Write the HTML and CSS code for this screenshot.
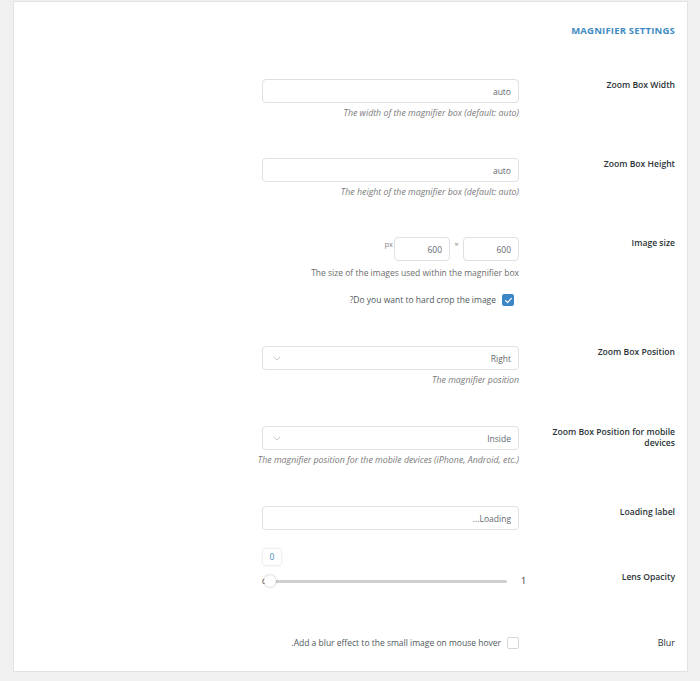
FILE: index.html
```html
<!DOCTYPE html>
<html lang="en" dir="rtl">
<head>
<meta charset="utf-8">
<title>Magnifier Settings</title>
<link rel="stylesheet" href="styles.css">
</head>
<body>
<div class="panel">
  <h2 class="heading">Magnifier Settings</h2>

  <div class="row">
    <div class="label">Zoom Box Width</div>
    <div class="field">
      <input class="text-input" type="text" value="auto">
      <p class="desc">The width of the magnifier box (default: auto)</p>
    </div>
  </div>

  <div class="row">
    <div class="label">Zoom Box Height</div>
    <div class="field">
      <input class="text-input" type="text" value="auto">
      <p class="desc">The height of the magnifier box (default: auto)</p>
    </div>
  </div>

  <div class="row row-size">
    <div class="label">Image size</div>
    <div class="field">
      <div class="size-inputs">
        <input class="text-input small" type="text" value="600">
        <span class="times">×</span>
        <input class="text-input small" type="text" value="600">
        <span class="px">px</span>
      </div>
      <p class="desc plain">The size of the images used within the magnifier box</p>
      <label class="check-line crop">
        <span class="checkbox checked"><svg viewBox="0 0 12 12" width="9" height="9"><path d="M2.2 6.3 L4.8 8.8 L9.8 3.2" fill="none" stroke="#fff" stroke-width="1.6" stroke-linecap="round" stroke-linejoin="round"/></svg></span>
        <span>Do you want to hard crop the image?</span>
      </label>
    </div>
  </div>

  <div class="row">
    <div class="label">Zoom Box Position</div>
    <div class="field">
      <div class="select"><span>Right</span><svg class="chev" viewBox="0 0 10 6" width="8" height="5"><path d="M1 1 L5 5 L9 1" fill="none" stroke="#b8b8b8" stroke-width="1"/></svg></div>
      <p class="desc">The magnifier position</p>
    </div>
  </div>

  <div class="row row-mobile">
    <div class="label">Zoom Box Position for mobile devices</div>
    <div class="field">
      <div class="select"><span>Inside</span><svg class="chev" viewBox="0 0 10 6" width="8" height="5"><path d="M1 1 L5 5 L9 1" fill="none" stroke="#b8b8b8" stroke-width="1"/></svg></div>
      <p class="desc nowrap">The magnifier position for the mobile devices (iPhone, Android, etc.)</p>
    </div>
  </div>

  <div class="row row-loading">
    <div class="label">Loading label</div>
    <div class="field">
      <input class="text-input" type="text" value="Loading...">
    </div>
  </div>

  <div class="row row-slider">
    <div class="label">Lens Opacity</div>
    <div class="field">
      <div class="slider">
        <span class="min">0</span>
        <div class="track">
          <span class="thumb"></span>
          <span class="bubble">0</span>
        </div>
        <span class="max">1</span>
      </div>
    </div>
  </div>

  <div class="row row-blur">
    <div class="label label-normal">Blur</div>
    <div class="field">
      <label class="check-line">
        <span class="checkbox"></span>
        <span>Add a blur effect to the small image on mouse hover.</span>
      </label>
    </div>
  </div>
</div>
</body>
</html>
```
FILE: styles.css
```css
html, body {
  margin: 0;
  padding: 0;
}
body {
  background: #f0f0f1;
  font-family: "Open Sans", "Noto Sans", "Liberation Sans", sans-serif;
  width: 700px;
  height: 681px;
  direction: rtl;
}
.panel {
  margin: 1px 12px 0 13px;
  height: 671px;
  box-sizing: border-box;
  background: #fff;
  border: 1px solid #e3e3e3;
  padding: 22px 12px 0 0;
}
.heading {
  margin: 0 0 21px;
  font-size: 9.5px;
  line-height: 14px;
  font-weight: 700;
  text-transform: uppercase;
  color: #3f8cc4;
  letter-spacing: 0.2px;
}
.row {
  display: flex;
  gap: 6px;
  padding: 20px 0 19px;
}
.row-mobile {
  padding-top: 21px;
}
.row-loading {
  padding-top: 21px;
}
.label {
  flex: none;
  width: 150px;
  font-size: 8.6px;
  line-height: 11px;
  font-weight: 600;
  color: #2c3338;
  padding-top: 1px;
}
.label-normal {
  font-weight: 400;
  font-size: 9px;
}
.field {
  flex: none;
  width: 257px;
}
.text-input {
  display: block;
  width: 100%;
  height: 24px;
  box-sizing: border-box;
  border: 1px solid #e0e0e0;
  border-radius: 4px;
  padding: 0 7px;
  font-family: inherit;
  font-size: 8.5px;
  color: #646970;
  background: #fff;
  outline: none;
  direction: rtl;
}
.desc {
  margin: 4px 0 0;
  font-size: 8.8px;
  line-height: 12px;
  font-style: italic;
  color: #7a7a7a;
}
.desc.plain {
  font-style: normal;
  font-size: 8.5px;
  color: #6c6c6c;
  margin-top: 6px;
}
.nowrap {
  white-space: nowrap;
}
.size-inputs {
  display: flex;
  align-items: flex-start;
}
.text-input.small {
  width: 56px;
  flex: none;
}
.times {
  font-size: 8px;
  color: #888;
  width: 13px;
  text-align: center;
  line-height: 10px;
  padding-top: 2px;
}
.px {
  font-size: 7.5px;
  color: #888;
  line-height: 10px;
  padding-top: 2px;
  margin-right: 1px;
}
.check-line {
  display: flex;
  align-items: center;
  gap: 6px;
  font-size: 8.5px;
  line-height: 14px;
  color: #50575e;
}
.check-line.crop {
  margin-top: 14px;
  padding-right: 5px;
}
.checkbox {
  flex: none;
  width: 10px;
  height: 10px;
  border: 1px solid #d6d6d6;
  border-radius: 2px;
  background: #fff;
  display: flex;
  align-items: center;
  justify-content: center;
}
.checkbox.checked {
  background: #3c86c8;
  border-color: #3c86c8;
}
.select {
  height: 24px;
  box-sizing: border-box;
  border: 1px solid #e0e0e0;
  border-radius: 4px;
  padding: 0 7px 0 10px;
  display: flex;
  align-items: center;
  justify-content: space-between;
  font-size: 8.5px;
  color: #646970;
}
.row-slider {
  padding-top: 22px;
}
.slider {
  direction: ltr;
  display: flex;
  align-items: center;
  height: 12px;
  margin-top: 4px;
  width: 270px;
  margin-right: -13px;
}
.min {
  font-size: 8px;
  color: #333;
  width: 8px;
  line-height: 10px;
}
.track {
  position: relative;
  width: 237px;
  height: 3px;
  background: #cfcfcf;
  border-radius: 2px;
}
.thumb {
  position: absolute;
  left: -6px;
  top: -5px;
  width: 12px;
  height: 12px;
  border-radius: 50%;
  background: #fff;
  box-shadow: 0 0 2px rgba(0, 0, 0, 0.35);
  box-sizing: border-box;
}
.bubble {
  position: absolute;
  left: -7px;
  top: -31px;
  width: 18px;
  height: 16px;
  background: #fff;
  border-radius: 3px;
  box-shadow: 0 0 3px rgba(0, 0, 0, 0.18);
  font-size: 8.5px;
  line-height: 16px;
  text-align: center;
  color: #3f8cc4;
}
.max {
  font-size: 9px;
  color: #333;
  margin-left: 14px;
  line-height: 10px;
}
.row-blur {
  padding-top: 30px;
}
.row-blur .check-line {
  margin-top: 0;
}
```
